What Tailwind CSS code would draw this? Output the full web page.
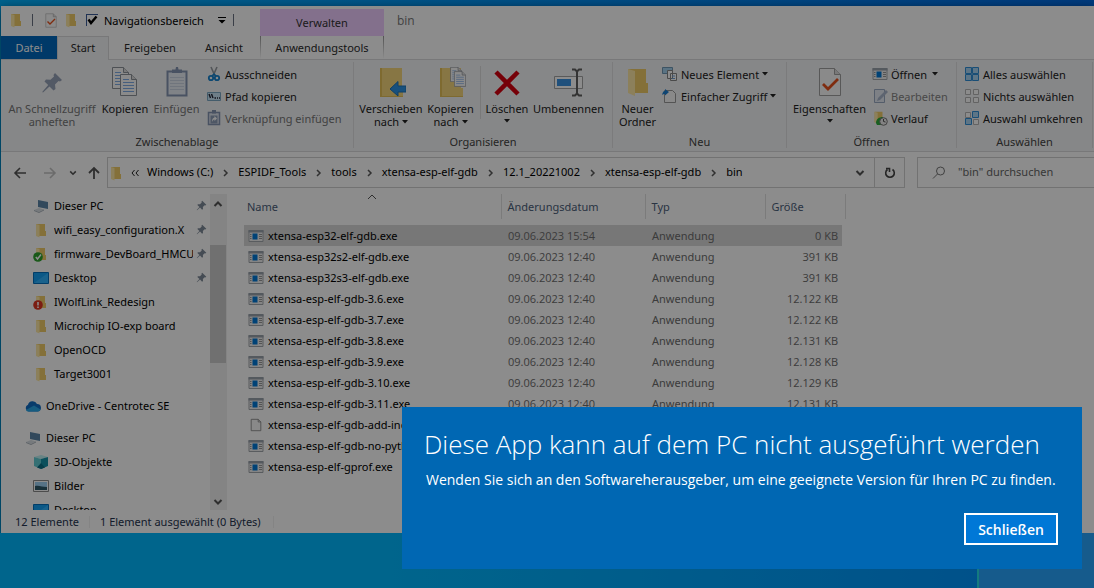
<!DOCTYPE html>
<html lang="de">
<head>
<meta charset="utf-8">
<meta name="viewport" content="width=device-width, initial-scale=1">
<title>bin</title>
<script src="https://cdn.jsdelivr.net/npm/@tailwindcss/browser@4"></script>
</head>
<body class="relative flex h-screen flex-col overflow-hidden bg-linear-to-r from-[#00b2ff] to-[#006ae3] pt-1.5 pl-px font-['Noto_Sans',sans-serif] text-[11px] leading-[13px] text-black">

<svg class="hidden" aria-hidden="true">
  <defs>
    <linearGradient id="gold" x1="0" x2="1"><stop offset="0" stop-color="#ffe9a0"/><stop offset="1" stop-color="#f3cd63"/></linearGradient>
    <linearGradient id="screen" x1="0" y1="1" x2="1" y2="0"><stop offset="0" stop-color="#1c9be6"/><stop offset="1" stop-color="#7fd0ff"/></linearGradient>
  </defs>
  <symbol id="folder" viewBox="0 0 16 16"><path d="M3 2h9v7h1v5H3z" fill="#f0cd68"/><path d="M3 2l3.500 1v12.500L3 14z" fill="#ffe9a6"/><path d="M6.500 3H12v6h1v5H6.500z" fill="url(#gold)"/></symbol>
  <symbol id="exe" viewBox="0 0 16 14"><path d="M1 1.500h14v11H1z" fill="#f0f0f0" stroke="#a3a8ad"/><path d="M.5 1h15v2.500H.5z" fill="#9aa3ac"/><path d="M4.500 4.500h5v6h-5z" fill="#0078d7"/><path d="M2 5.500h1.500M2 7.500h1.500M2 9.500h1.500M11 5.500h3M11 7.500h3M11 9.500h3" stroke="#9a9a9a"/></symbol>
  <symbol id="file" viewBox="0 0 16 16"><path d="M2.500 1.500h8l3 3v10h-11z" fill="#fafafa" stroke="#8a8a8a"/><path d="M10.500 1.500v3h3" fill="none" stroke="#8a8a8a"/></symbol>
  <symbol id="pin" viewBox="0 0 16 16"><path d="M9 1l6 6-1.500 1-1-.3L10 10.200l.2 3L8.800 14 5.900 11 1.500 15l-.5-.5L5 10.100 2 7.200 2.800 6l3 .2L8.300 3.500 8 2.300z" fill="#7f8b99"/></symbol>
  <symbol id="bigpin" viewBox="0 0 22 22"><path d="M14 1l7 7-2 1.500-1.500-.5-3.500 3.500.5 4.500-2 1.500-4-4L2 20.500 1.200 20l6-7L3.500 9.500 5 7.500l4.500.3L13 4.500l-.5-1.500z" fill="#96a2b8"/></symbol>
  <symbol id="pc" viewBox="0 0 16 16"><path d="M5 2l10 2v7L5 9z" fill="#5b86a8"/><path d="M5.500 2.600l9 1.800v5.900l-9-1.800z" fill="url(#screen)"/><path d="M1 12l5-2 5 1.500-5 2.500z" fill="#d8dee3"/><path d="M1 12l5 2 5-2.500v1l-5 2.500-5-2z" fill="#a9b3bc"/></symbol>
  <symbol id="desk" viewBox="0 0 16 16"><path d="M.5 2.500h15v11H.5z" fill="#14a0f5" stroke="#0570bd"/><path d="M1 13L15 3v10z" fill="#2fb2ff"/></symbol>
  <symbol id="chev" viewBox="0 0 10 10"><path d="M3.500 2L6.500 5 3.500 8" fill="none" stroke="#5a5a5a" stroke-width="1.500"/></symbol>
  <symbol id="down" viewBox="0 0 10 10"><path d="M1.500 3L5 6.500 8.500 3" fill="none" stroke="#555" stroke-width="2"/></symbol>
  <symbol id="tri" viewBox="0 0 6 4"><path d="M0 0h6L3 3.500z" fill="#222"/></symbol>
  <symbol id="props" viewBox="0 0 24 30"><path d="M1.500 1.500h15l6 6v21h-21z" fill="#fbfbfb" stroke="#a0a0a0"/><path d="M16.500 1.500v6h6" fill="#ddd" stroke="#a0a0a0"/><path d="M5 17l5 5L20 12" fill="none" stroke="#e8501c" stroke-width="2.800"/></symbol>
  <symbol id="page" viewBox="0 0 17 22"><path d="M.5.5h11l5 5v16H.5z" fill="#fbfbfb" stroke="#8d9299"/><path d="M11.500.5v5h5" fill="#ddd" stroke="#8d9299"/><path d="M3 5.500h6M3 8.500h11M3 11.500h11M3 14.500h11M3 17.500h11" stroke="#7fabe6"/></symbol>
</svg>

<div class="flex min-h-0 flex-1 flex-col overflow-hidden bg-white shadow-[0_3px_10px_rgba(0,0,0,0.6)]">

  <!-- Title bar -->
  <header class="flex h-[30px] shrink-0 items-stretch">
    <div class="flex w-[259px] shrink-0 items-center pb-0.5 pl-[7px]">
      <svg class="size-4"><use href="#folder"/></svg>
      <span class="ml-2 h-3 w-px bg-gray-500"></span>
      <svg class="ml-2.5 h-[15px] w-4"><use href="#props"/></svg>
      <svg class="ml-1 size-4"><use href="#folder"/></svg>
      <label class="ml-[7px] flex items-center gap-1.5">
        <span class="relative flex size-3">
          <input type="checkbox" checked class="size-3 appearance-none border border-r-0 border-b-0 border-[#3b5c98] bg-white">
          <svg class="absolute inset-0 size-3" viewBox="0 0 12 12"><path d="M2.500 5.500L5 9l5.500-6.500" fill="none" stroke="#000" stroke-width="2.400"/></svg>
        </span>
        Navigationsbereich
      </label>
      <button class="ml-3.5" aria-label="Symbolleiste anpassen"><svg class="h-[7px] w-2" viewBox="0 0 8 7"><path d="M0 0h8v1H0zM.5 3h7L4 6.500z"/></svg></button>
      <span class="ml-[7px] h-3 w-px bg-gray-500"></span>
    </div>
    <div class="mt-[3px] flex w-[124px] shrink-0 items-center justify-center bg-[#efccff] text-[#333]">Verwalten</div>
    <h1 class="pt-2 pl-[13px] font-['Open_Sans',sans-serif] text-[12px] text-[#777]">bin</h1>
  </header>

  <!-- Ribbon tabs -->
  <nav class="flex h-6 shrink-0 items-stretch border-b border-[#dadbdc] text-[#2b2b2b]">
    <button class="w-14 bg-[#0069bd] text-white">Datei</button>
    <button class="-mb-px w-[52px] border border-b-0 border-[#dadbdc] bg-[#f5f6f7] pb-0.5">Start</button>
    <button class="ml-1.5 w-[70px]">Freigeben</button>
    <button class="ml-1 w-[70px]">Ansicht</button>
    <button class="ml-px flex w-[124px] items-center justify-between"><span class="h-full w-px bg-linear-to-b from-[#999] to-white"></span>Anwendungstools<span class="h-full w-px bg-linear-to-b from-[#999] to-white"></span></button>
  </nav>

  <!-- Ribbon -->
  <div class="flex h-[92px] shrink-0 border-b border-[#dadbdc] bg-[#f5f6f7] pt-0.5 pb-[3px] text-[#222]">
    <section class="flex w-[352px] shrink-0 flex-col">
      <div class="flex flex-1">
        <button class="flex w-[102px] flex-col items-center pt-2.5 text-[#777]"><svg class="mb-2 size-[22px]"><use href="#bigpin"/></svg>An Schnellzugriff<br>anheften</button>
        <button class="flex w-11 flex-col items-center pt-[5px]">
          <svg class="mb-[5px] h-[30px] w-[26px]" viewBox="0 0 26 30"><use href="#page" width="17" height="22"/><use href="#page" x="8" y="7" width="17" height="22"/></svg>Kopieren</button>
        <button class="flex w-[59px] flex-col items-center pt-[5px] text-[#777]">
          <svg class="mb-[5px] h-[30px] w-6" viewBox="0 0 24 30"><path d="M2.500 4.500h19v24h-19z" fill="#e9eef6" stroke="#8595b3" stroke-width="2"/><path d="M7 2.500h3.500L11 0h2l.5 2.500H17V6H7z" fill="#8595b3"/><path d="M5 10.500h14M5 13.500h14M5 16.500h14M5 19.500h14M5 22.500h14" stroke="#ccd5e4"/></svg>Einfügen</button>
        <div class="flex flex-col pt-px">
          <button class="flex h-[22px] items-center gap-[3px]"><svg class="size-4" viewBox="0 0 16 16"><path d="M5 1l4 9M11 1L7 10" stroke="#959ba2" stroke-width="1.600"/><circle cx="5" cy="12" r="2.200" fill="none" stroke="#1683cf" stroke-width="1.800"/><circle cx="11" cy="12" r="2.200" fill="none" stroke="#1683cf" stroke-width="1.800"/><path d="M6 10l2-2 2 2" fill="none" stroke="#1683cf" stroke-width="1.500"/></svg>Ausschneiden</button>
          <button class="flex h-[22px] items-center gap-[3px]"><svg class="size-4" viewBox="0 0 16 16"><path d="M1.500 4.500h13v8h-13z" fill="#c8e6f7" stroke="#7da8c4"/><path d="M3 6l1.500 4M5.500 6L7 10M8.500 10H10M11 10h1M13 10h1" stroke="#223" stroke-width="1.400"/></svg>Pfad kopieren</button>
          <button class="flex h-[22px] items-center gap-[3px] text-[#777]"><svg class="size-4" viewBox="0 0 16 16"><path d="M2.500 2.500h11v12h-11z" fill="#dfe5ef" stroke="#8595b3" stroke-width="1.500"/><path d="M6 0h4v3.500H6z" fill="#8595b3"/><path d="M4.500 5.500h7v8h-7z" fill="#8f9fb9"/><path d="M6 12c0-3 1-4 2.500-4.500V6l2.500 2.500L8.500 11V9.500C7 9.500 6.500 11 6 12z" fill="#fff"/></svg>Verknüpfung einfügen</button>
        </div>
      </div>
      <h2 class="text-center text-[#444]">Zwischenablage</h2>
    </section>
    <section class="flex w-[259px] shrink-0 flex-col border-l border-[#e0e1e2]">
      <div class="flex flex-1">
        <button class="flex w-[74px] flex-col items-center pt-[5px]">
          <svg class="mb-[5px] h-[30px] w-[30px]" viewBox="0 0 30 30"><path d="M4 1h22v20h1v9H4z" fill="#f6d77d"/><path d="M4 1h2v29H4zM4 29h23v1H4z" fill="#e6c158"/><path d="M14 22l8-7.500v4.500h8v6h-8v4z" fill="#2b93e3" stroke="#1c74ba"/></svg>Verschieben<span class="flex items-center gap-[3px]">nach <svg class="h-1 w-1.5"><use href="#tri"/></svg></span></button>
        <button class="flex w-[45px] flex-col items-center pt-[5px]">
          <svg class="mb-[5px] h-[30px] w-[30px]" viewBox="0 0 30 30"><path d="M4 1h21v20h2v9H4z" fill="#f6d77d"/><path d="M4 1h2v29H4zM4 29h23v1H4z" fill="#e6c158"/><use href="#page" x="14" width="12" height="15"/><use href="#page" x="18" y="4" width="12" height="16"/></svg>Kopieren<span class="flex items-center gap-[3px]">nach <svg class="h-1 w-1.5"><use href="#tri"/></svg></span></button>
        <div class="mt-1 mb-4 ml-[7px] w-px bg-[#dcdcdc]"></div>
        <button class="flex w-[52px] flex-col items-center pt-[5px]">
          <svg class="mb-[5px] h-[30px] w-[30px]" viewBox="0 0 30 30"><path d="M4 5L26 27M26 5L4 27" stroke="#d8000f" stroke-width="4.500"/></svg>Löschen<svg class="mt-1 h-1 w-1.5"><use href="#tri"/></svg></button>
        <button class="flex w-[71px] flex-col items-center pt-[5px]">
          <svg class="mb-[5px] h-[30px] w-[30px]" viewBox="0 0 30 30"><path d="M.5 9.500h28v12H.5z" fill="#fff" stroke="#a5a5a5"/><path d="M3 12h14v7H3z" fill="#3a93e2"/><path d="M18 2.500h3L23 4.500 25 2.500H28M18 28.500h3L23 26.500 25 28.500H28M23 4v23" fill="none" stroke="#5f5f5f" stroke-width="2"/></svg>Umbenennen</button>
      </div>
      <h2 class="text-center text-[#444]">Organisieren</h2>
    </section>
    <section class="flex w-[174px] shrink-0 flex-col border-l border-[#e0e1e2]">
      <div class="flex flex-1">
        <button class="flex w-[49px] flex-col items-center pt-[5px]"><svg class="mb-[5px] h-[30px] w-5" viewBox="3 1 10 15" preserveAspectRatio="none"><use href="#folder" width="16" height="16"/></svg>Neuer<br>Ordner</button>
        <div class="flex flex-col pt-px">
          <button class="flex h-[22px] items-center gap-[3px]"><svg class="size-4" viewBox="0 0 16 16"><path d="M.5 1.500h10v6H.5z" fill="#a5d2ee" stroke="#6f98b4"/><path d="M5.500 4.500h5v8h-5zM8.500 7.500h6v7h-6z" fill="#fff" stroke="#888"/><path d="M10 10h3M10 12.500h3" stroke="#6d9ed6"/></svg>Neues Element <svg class="h-1 w-1.5"><use href="#tri"/></svg></button>
          <button class="flex h-[22px] items-center gap-[3px]"><svg class="size-4" viewBox="0 0 16 16"><path d="M2.500 2.500h8l3 3v9h-11z" fill="#fafafa" stroke="#999"/><path d="M0 7c1-4 2-4 3-4V1l4 3-4 3.500V6C2 6 1 6 0 7z" fill="#1d7fd0"/></svg>Einfacher Zugriff <svg class="h-1 w-1.5"><use href="#tri"/></svg></button>
        </div>
      </div>
      <h2 class="text-center text-[#444]">Neu</h2>
    </section>
    <section class="flex w-[170px] shrink-0 flex-col border-l border-[#e0e1e2]">
      <div class="flex flex-1">
        <button class="flex w-[85px] flex-col items-center pt-[5px]"><svg class="mb-[5px] h-[30px] w-6"><use href="#props"/></svg>Eigenschaften<svg class="mt-1 h-1 w-1.5"><use href="#tri"/></svg></button>
        <div class="flex flex-col pt-px">
          <button class="flex h-[22px] items-center gap-[3px]"><svg class="h-3.5 w-4"><use href="#exe"/></svg>Öffnen <svg class="ml-0.5 h-1 w-1.5"><use href="#tri"/></svg></button>
          <button class="flex h-[22px] items-center gap-[3px] text-[#858585]"><svg class="size-4" viewBox="0 0 16 16"><path d="M2.500 1.500h10v13h-10z" fill="#e6ecf5" stroke="#9aa9c2"/><path d="M5 13l1-3 8-8 2 2-8 8z" fill="#a9b6cc"/></svg>Bearbeiten</button>
          <button class="flex h-[22px] items-center gap-[3px]"><svg class="size-4" viewBox="0 0 16 16"><use href="#folder" width="14" height="14"/><path d="M4 13c0-4 3-6 7-6v8H5z" fill="#2fae3c"/><circle cx="11.500" cy="11.500" r="3.800" fill="#eee" stroke="#777"/><path d="M11.500 9v2.500l2 .5" fill="none" stroke="#555"/></svg>Verlauf</button>
        </div>
      </div>
      <h2 class="text-center text-[#444]">Öffnen</h2>
    </section>
    <section class="flex w-[137px] shrink-0 flex-col border-x border-[#e0e1e2]">
      <div class="flex flex-1 flex-col pt-px pl-[7px]">
          <button class="flex h-[22px] items-center gap-[3px]"><svg class="size-4" viewBox="0 0 16 16"><path d="M1.500 1.500h6v6h-6zM8.500 1.500h6v6h-6zM1.500 8.500h6v6h-6zM8.500 8.500h6v6h-6z" fill="#a9d6f5" stroke="#2f8fd8"/></svg>Alles auswählen</button>
          <button class="flex h-[22px] items-center gap-[3px]"><svg class="size-4" viewBox="0 0 16 16"><path d="M1.500 1.500h5v5h-5zM9.500 1.500h5v5h-5zM1.500 9.500h5v5h-5zM9.500 9.500h5v5h-5z" fill="#fff" stroke="#b5b5b5"/></svg>Nichts auswählen</button>
          <button class="flex h-[22px] items-center gap-[3px]"><svg class="size-4" viewBox="0 0 16 16"><path d="M1.500 2.500h5v5h-5zM9.500 9.500h5v5h-5z" fill="#fff" stroke="#b5b5b5"/><path d="M8.500 1.500h6v6h-6zM1.500 8.500h6v6h-6z" fill="#a9d6f5" stroke="#2f8fd8"/></svg>Auswahl umkehren</button>
      </div>
      <h2 class="text-center text-[#444]">Auswählen</h2>
    </section>
  </div>

  <!-- Address bar -->
  <div class="flex h-[42px] shrink-0 items-start pt-[5px]">
    <div class="flex h-[31px] w-[106px] shrink-0 items-center pl-3">
      <button aria-label="Zurück"><svg class="size-3.5" viewBox="0 0 14 14"><path d="M13 7H2M7 2L2 7l5 5" fill="none" stroke="#555" stroke-width="1.600"/></svg></button>
      <button class="ml-4" aria-label="Vorwärts"><svg class="size-3.5" viewBox="0 0 14 14"><path d="M1 7h11M7 2l5 5-5 5" fill="none" stroke="#c4c4c4" stroke-width="1.600"/></svg></button>
      <button class="ml-3" aria-label="Verlauf"><svg class="size-2"><use href="#down" width="8" height="8"/></svg></button>
      <button class="ml-2.5" aria-label="Nach oben"><svg class="size-3.5" viewBox="0 0 14 14"><path d="M7 13V2M2 7l5-5 5 5" fill="none" stroke="#555" stroke-width="1.800"/></svg></button>
    </div>
    <div class="flex h-[31px] w-[798px] shrink-0 items-center border border-[#d0d0d0]">
      <svg class="size-4"><use href="#folder"/></svg>
      <svg class="ml-[7px] size-2" viewBox="0 0 8 8"><path d="M3.500 1L1 4l2.500 3M7.500 1L5 4l2.500 3" fill="none" stroke="#222"/></svg>
      <div class="ml-2 flex flex-1 items-center gap-[7px] pb-0.5">
        <a href="#">Windows (C:)</a><svg class="mt-0.5 h-2.5 w-[11px]"><use href="#chev"/></svg>
        <a href="#">ESPIDF_Tools</a><svg class="mt-0.5 h-2.5 w-[11px]"><use href="#chev"/></svg>
        <a href="#">tools</a><svg class="mt-0.5 h-2.5 w-[11px]"><use href="#chev"/></svg>
        <a href="#">xtensa-esp-elf-gdb</a><svg class="mt-0.5 h-2.5 w-[11px]"><use href="#chev"/></svg>
        <a href="#">12.1_20221002</a><svg class="mt-0.5 h-2.5 w-[11px]"><use href="#chev"/></svg>
        <a href="#">xtensa-esp-elf-gdb</a><svg class="mt-0.5 h-2.5 w-[11px]"><use href="#chev"/></svg>
        <a href="#">bin</a>
      </div>
      <button class="mr-[9px]" aria-label="Vorherige Orte"><svg class="size-2.5"><use href="#down"/></svg></button>
      <button class="flex h-full w-[30px] items-center justify-center border-l border-[#d0d0d0]" aria-label="Aktualisieren"><svg class="size-3" viewBox="0 0 12 12"><path d="M8.500 2.500A4.300 4.300 0 1 1 3.500 2.500M5.500 5V1.500H2" fill="none" stroke="#444" stroke-width="1.600"/></svg></button>
    </div>
    <div class="ml-3 flex h-[31px] min-w-0 flex-1 items-center border border-r-0 border-[#d0d0d0]">
      <svg class="ml-3.5 size-3.5 shrink-0" viewBox="0 0 14 14"><circle cx="8.500" cy="5" r="4" fill="none" stroke="#777"/><path d="M5.500 8L1 12.500" stroke="#777"/></svg>
      <input type="search" aria-label="bin durchsuchen" placeholder="&quot;bin&quot; durchsuchen" class="ml-3 min-w-0 flex-1 pb-0.5 placeholder:text-[#666]">
    </div>
  </div>

  <div class="flex min-h-0 flex-1">
    <!-- Navigation pane -->
    <aside class="flex w-[226px] shrink-0 border-r border-[#f0f0f0]">
      <ul class="min-w-0 flex-1 overflow-hidden *:flex *:h-6 *:items-center *:gap-[5px] *:pb-0.5 *:pl-8">
        <li><svg class="mt-0.5 size-4 shrink-0"><use href="#pc"/></svg><span class="w-[139px] overflow-hidden leading-[15px] whitespace-nowrap">Dieser PC</span><svg class="-ml-0.5 size-[11px] shrink-0"><use href="#pin"/></svg></li>
        <li><svg class="mt-0.5 size-4 shrink-0"><use href="#folder"/></svg><span class="w-[139px] overflow-hidden leading-[15px] whitespace-nowrap">wifi_easy_configuration.X</span><svg class="-ml-0.5 size-[11px] shrink-0"><use href="#pin"/></svg></li>
        <li><svg class="mt-0.5 size-4 shrink-0" viewBox="0 0 16 16"><use href="#folder" width="16" height="16"/><circle cx="5" cy="11" r="4.800" fill="#2ea32e"/><path d="M2.800 11l1.700 2L8 8.500" fill="none" stroke="#fff" stroke-width="1.500"/></svg><span class="w-[139px] overflow-hidden leading-[15px] whitespace-nowrap">firmware_DevBoard_HMCU</span><svg class="-ml-0.5 size-[11px] shrink-0"><use href="#pin"/></svg></li>
        <li><svg class="mt-0.5 size-4 shrink-0"><use href="#desk"/></svg><span class="w-[139px] overflow-hidden leading-[15px] whitespace-nowrap">Desktop</span><svg class="-ml-0.5 size-[11px] shrink-0"><use href="#pin"/></svg></li>
        <li><svg class="mt-0.5 size-4 shrink-0" viewBox="0 0 16 16"><use href="#folder" width="16" height="16"/><circle cx="5" cy="11" r="4.800" fill="#e03524"/><path d="M5 8v3.500M5 12.500V14" stroke="#fff" stroke-width="1.600"/></svg>IWolfLink_Redesign</li>
        <li><svg class="mt-0.5 size-4 shrink-0"><use href="#folder"/></svg>Microchip IO-exp board</li>
        <li><svg class="mt-0.5 size-4 shrink-0"><use href="#folder"/></svg>OpenOCD</li>
        <li><svg class="mt-0.5 size-4 shrink-0"><use href="#folder"/></svg>Target3001</li>
        <li class="my-2 pl-6!"><svg class="mt-0.5 size-4 shrink-0" viewBox="0 0 16 16"><path d="M3.500 13.500A3.500 3.500 0 0 1 3 6.800 4.800 4.800 0 0 1 12 6a3.800 3.800 0 0 1 1 7.500z" fill="#0f6cc4"/><path d="M1 12l8-4.500 6.500 4c-.5 1.300-1.300 2-2.500 2H3.500c-1 0-2-.5-2.500-1.500z" fill="#28a8ea"/></svg>OneDrive - Centrotec SE</li>
        <li class="pl-6!"><svg class="mt-0.5 size-4 shrink-0"><use href="#pc"/></svg>Dieser PC</li>
        <li><svg class="mt-0.5 size-4 shrink-0" viewBox="0 0 16 16"><path d="M1 3l7-2 7 2-7 2z" fill="#bdf0f2"/><path d="M1 3l7 2v10l-7-3z" fill="#62cdd4"/><path d="M15 3L8 5v10l7-3z" fill="#1593a8"/><path d="M8 9l4 4.500L8 15l-4-1.500z" fill="#0c6f86"/></svg>3D-Objekte</li>
        <li><svg class="mt-0.5 size-4 shrink-0" viewBox="0 0 16 16"><path d="M.5 2.500h15v11H.5z" fill="#fff" stroke="#8a8a8a"/><path d="M2 4h12v8H2z" fill="#9fd1f5"/><path d="M2 8c4-1 7 1 12 1v3H2z" fill="#2c5868"/></svg>Bilder</li>
        <li><svg class="mt-0.5 size-4 shrink-0"><use href="#desk"/></svg>Desktop</li>
      </ul>
      <div class="flex w-4 flex-col items-center bg-[#f0f0f0]">
        <svg class="my-[5px] size-2.5 shrink-0" viewBox="0 0 10 10"><path d="M1.500 7L5 3.500 8.500 7" fill="none" stroke="#555" stroke-width="2"/></svg>
        <div class="mt-[31px] h-[118px] w-full bg-[#cdcdcd]"></div>
        <svg class="mt-auto mb-[3px] size-2.5 shrink-0"><use href="#down"/></svg>
      </div>
    </aside>

    <!-- File list -->
    <main class="min-w-0 flex-1 overflow-hidden pl-[17px]">
      <table class="w-[601px] table-fixed border-collapse">
        <colgroup><col class="w-[257px]"><col class="w-36"><col class="w-[120px]"><col class="w-20"></colgroup>
        <thead>
          <tr class="h-[25px] text-left text-[#4c607a] *:border-r *:border-[#e0e0e0] *:font-normal">
            <th class="relative pl-[3px]">Name<svg class="absolute top-0 left-[123px] h-1.5 w-2.5" viewBox="0 0 10 6"><path d="M1 5l4-4 4 4" fill="none" stroke="#555"/></svg></th>
            <th class="pl-1.5">Änderungsdatum</th><th class="pl-1.5">Typ</th><th class="pl-1.5">Größe</th>
          </tr>
        </thead>
      </table>
      <table class="mt-1.5 w-[598px] table-fixed border-collapse text-[#6d6d6d]">
        <colgroup><col class="w-[257px]"><col class="w-36"><col class="w-[120px]"><col class="w-[77px]"></colgroup>
        <tbody id="files"></tbody>
      </table>
    </main>
  </div>

  <!-- Status bar -->
  <footer class="flex h-[23px] shrink-0 items-center pl-3.5 text-[#26344f]">
    <span class="w-[74px]">12 Elemente</span><span class="h-3 w-px bg-[#f0f0f0]"></span><span class="ml-2.5 w-[173px]">1 Element ausgewählt (0 Bytes)</span><span class="h-3 w-px bg-[#f0f0f0]"></span>
  </footer>
</div>

<!-- Desktop strip below the window -->
<div class="-ml-px flex h-[55px] shrink-0">
  <div class="flex-1 bg-linear-to-r from-[#00b8ff] from-40% to-[#0094fb]"></div>
  <div class="w-0.5 bg-[#25e0e8]"></div>
  <div class="w-[115px] bg-[#29a6ff]"></div>
</div>

<!-- Dimmed backdrop and message -->
<div class="absolute inset-0 flex items-end justify-end bg-black/45 pr-3 pb-[19px] font-['Open_Sans',sans-serif]">
  <div role="alertdialog" aria-labelledby="dlg-title" aria-describedby="dlg-text" class="flex h-[162px] w-[680px] flex-col bg-[#0067b3] px-6 pt-[19px] pb-6 text-white">
    <h2 id="dlg-title" class="-ml-0.5 text-[26px] leading-9 font-light whitespace-nowrap">Diese App kann auf dem PC nicht ausgeführt werden</h2>
    <p id="dlg-text" class="mt-2 text-[14px] leading-5 whitespace-nowrap">Wenden Sie sich an den Softwareherausgeber, um eine geeignete Version für Ihren PC zu finden.</p>
    <button class="mt-auto h-8 w-[94px] self-end border-2 border-white bg-[#0078d7] text-[14px] font-semibold">Schließen</button>
  </div>
</div>

<script>
const files = [
  ["xtensa-esp32-elf-gdb.exe", "09.06.2023 15:54", "0 KB"],
  ["xtensa-esp32s2-elf-gdb.exe", "09.06.2023 12:40", "391 KB"],
  ["xtensa-esp32s3-elf-gdb.exe", "09.06.2023 12:40", "391 KB"],
  ["xtensa-esp-elf-gdb-3.6.exe", "09.06.2023 12:40", "12.122 KB"],
  ["xtensa-esp-elf-gdb-3.7.exe", "09.06.2023 12:40", "12.122 KB"],
  ["xtensa-esp-elf-gdb-3.8.exe", "09.06.2023 12:40", "12.131 KB"],
  ["xtensa-esp-elf-gdb-3.9.exe", "09.06.2023 12:40", "12.128 KB"],
  ["xtensa-esp-elf-gdb-3.10.exe", "09.06.2023 12:40", "12.129 KB"],
  ["xtensa-esp-elf-gdb-3.11.exe", "09.06.2023 12:40", "12.131 KB"],
  ["xtensa-esp-elf-gdb-add-index", "", ""],
  ["xtensa-esp-elf-gdb-no-python.exe", "", ""],
  ["xtensa-esp-elf-gprof.exe", "", ""]
];
document.getElementById("files").innerHTML = files.map(([name, date, size], i) => `
  <tr class="h-[21px] ${i === 0 ? "bg-[#d9d9d9]" : ""}">
    <td class="pl-1 text-black"><span class="flex items-center gap-1 whitespace-nowrap"><svg class="h-3.5 w-4 shrink-0"><use href="${name.endsWith(".exe") ? "#exe" : "#file"}"/></svg>${name}</span></td>
    <td class="pl-[7px] font-['Open_Sans',sans-serif]">${date}</td>
    <td class="pl-[7px]">${date ? "Anwendung" : ""}</td>
    <td class="pr-1 text-right font-['Open_Sans',sans-serif] whitespace-nowrap">${size}</td>
  </tr>`).join("");
</script>
</body>
</html>
